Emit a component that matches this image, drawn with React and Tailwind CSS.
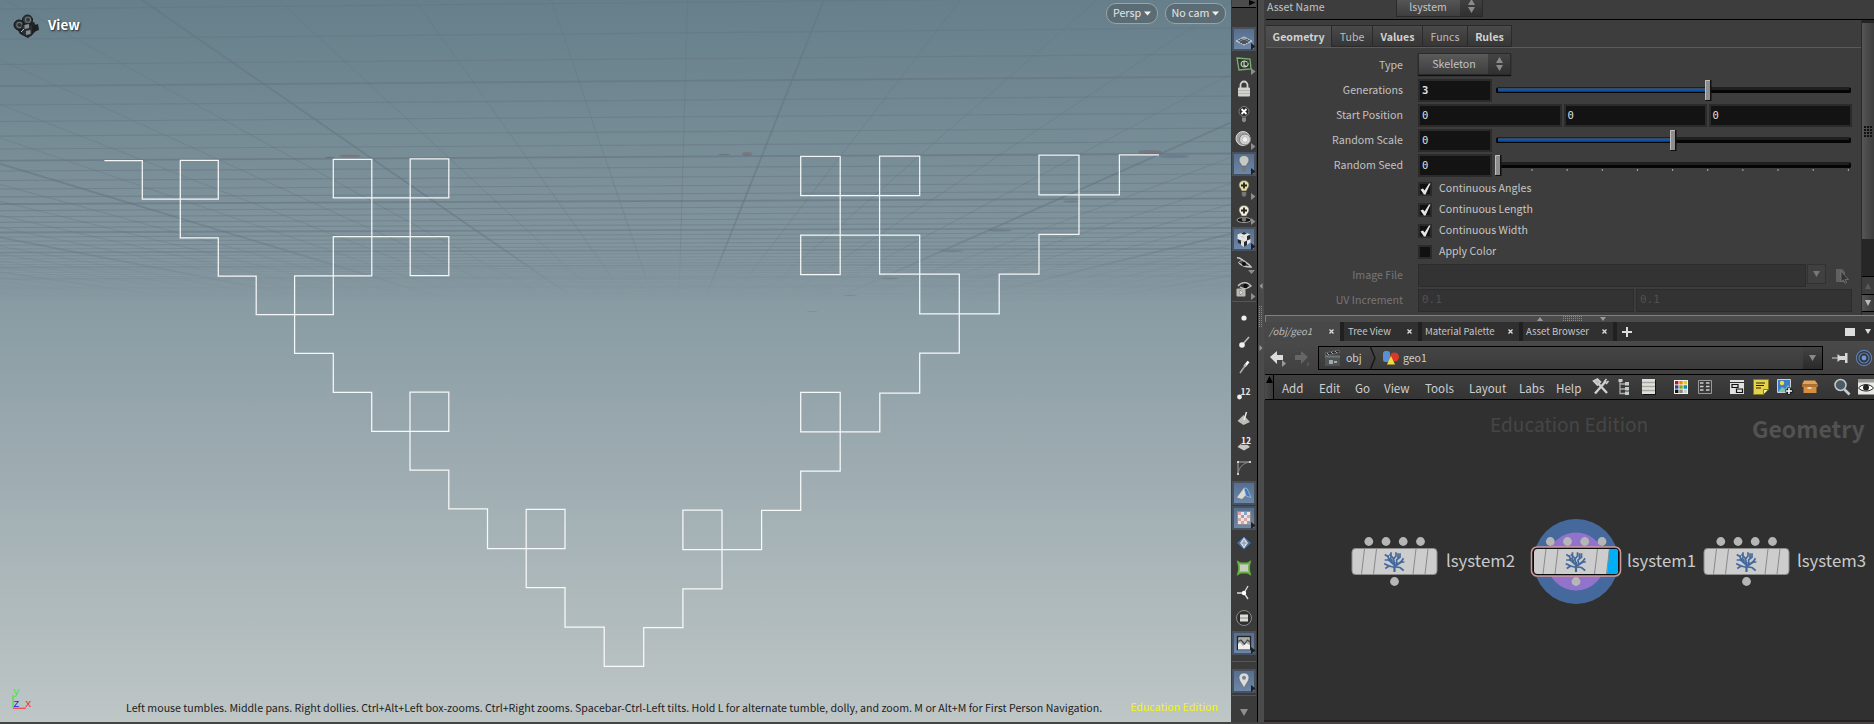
import React from "react";

const GRID_ROWS = Array.from({ length: 50 }, (_, i) => i - 3);
const GRID_COLS = Array.from({ length: 90 }, (_, i) => i - 45);
const HORIZON = 369;
const VANISH_X = 677;

function T({ className = "", children }) {
  return <span className={"inline-block whitespace-nowrap " + className}>{children}</span>;
}

function Grid() {
  return (
    <g stroke="#5f6c7c" clipPath="url(#sky)" mask="url(#fade)">
      {GRID_ROWS.map((n) => {
        const h = 3959 / (14 + n);
        return (
          <line key={"r" + n} x1="0" x2="1231" y1={HORIZON - h} y2={HORIZON - h * 1.0342}
            strokeWidth={n % 5 === 0 ? 1.8 : 1.1} strokeOpacity={n % 5 === 0 ? 0.5 : 0.4} />
        );
      })}
      {GRID_COLS.map((k) => {
        const x = 824 + k * 136.4;
        return (
          <line key={"c" + k} x1={x} y1="0" x2={VANISH_X} y2={HORIZON}
            strokeWidth={k % 5 === 0 ? 1.8 : 1} strokeOpacity={k % 5 === 0 ? 0.45 : 0.32} />
        );
      })}
    </g>
  );
}

function Scene() {
  return (
    <svg className="absolute inset-0" width="1231" height="722" viewBox="0 0 1231 722">
      <defs>
        <clipPath id="sky"><rect width="1231" height="325" /></clipPath>
        <linearGradient id="fadeGrad" x1="0" y1="0" x2="0" y2="1">
          <stop offset="0" stopColor="#fff" stopOpacity=".7" />
          <stop offset=".6" stopColor="#fff" />
          <stop offset=".76" stopColor="#fff" stopOpacity=".75" />
          <stop offset=".93" stopColor="#fff" stopOpacity="0" />
        </linearGradient>
        <mask id="fade"><rect width="1231" height="325" fill="url(#fadeGrad)" /></mask>
      </defs>
      <Grid />
      <g fillOpacity=".5">
        <ellipse cx="747" cy="154" rx="5" ry="2" fill="#7a6268" />
        <ellipse cx="724" cy="154.5" rx="6" ry=".8" fill="#5b6570" />
        <ellipse cx="350" cy="156" rx="11" ry="1.3" fill="#75635f" />
        <ellipse cx="330" cy="157.5" rx="5" ry=".7" fill="#5b6570" />
        <ellipse cx="1150" cy="152" rx="12" ry="2" fill="#75606a" />
        <ellipse cx="1174" cy="156.5" rx="15" ry="1.6" fill="#5c6e84" />
        <ellipse cx="1071" cy="201.5" rx="8" ry="1" fill="#5c6a74" />
        <ellipse cx="1000" cy="230.5" rx="12" ry="1" fill="#5c6a74" />
        <ellipse cx="952" cy="251" rx="12" ry=".8" fill="#5c6a74" />
        <ellipse cx="890" cy="278.5" rx="9" ry=".8" fill="#66747c" />
        <ellipse cx="850" cy="295.5" rx="7" ry=".5" fill="#6c7a82" />
        <ellipse cx="812" cy="311.5" rx="6" ry=".4" fill="#74828a" />
      </g>
      <path fill="none" stroke="#fff" strokeWidth="1.25" strokeOpacity=".92"
        d="M104.4 160.7H142.3V199H218.3V160.3H180.3V237.8H218.3V276H256.2V314.6H333.3V236.7H448.8V275.7H410.2V158.8H448.8V197.8H333.3V159.3H371.8V275.8H294.6V353.4H333.3V392.3H371.7V431.3H448.8V392.2H410V470.2H448.8V508.9H487.5V548.6H565V509.4H526.2V587.7H565V627.2H604.2V666.4H643.7V627.6H682.9V588.9H722V510.2H682.9V549.6H761.6V510.4H800.7V471.2H840.2V392.3H800.7V431.9H879.8V393H919.7V353H959.3V274.2H879.6V156H919.7V195.6H800.7V156.3H840.2V274.5H800.7V235.2H919.7V313.8H999.2V274H1039V234.3H1079V155.1H1039V194.8H1119.4V154.8H1159" />
      <g fill="none" strokeWidth="1.4">
        <path d="M13 695V708" stroke="#55dd55" />
        <path d="M13 708.3H26" stroke="#ee5555" />
      </g>
    </svg>
  );
}

function CameraIcon() {
  return (
    <svg width="28" height="26" viewBox="0 0 28 26">
      <path d="M4 14l6-6 12 1 4 7-6 6-4 3-8-4z" fill="#22282b" />
      <circle cx="7" cy="12" r="5" fill="#2a2f32" stroke="#14181a" />
      <circle cx="15.500" cy="7" r="5" fill="#33393d" stroke="#14181a" />
      <circle cx="7.400" cy="12" r="2.600" fill="none" stroke="#6d757a" strokeWidth="1.100" />
      <circle cx="16" cy="6.800" r="2.600" fill="none" stroke="#6d757a" strokeWidth="1.100" />
      <path d="M10 12l6-2 5 3-1 9-5 2-6-4z" fill="#2b3033" stroke="#14181a" strokeWidth=".6" />
      <path d="M12.500 12l4.500-1v4l-4.500 1zM14 18l4.500-1v4l-4.500 1z" fill="#868e93" />
      <path d="M20 13l6-2 1 6-6 2z" fill="#1c2022" />
      <path d="M9 19l3-3" stroke="#b9bec0" />
    </svg>
  );
}

function Pill({ className, children }) {
  return (
    <div className={"flex h-[21px] items-center justify-center gap-[3px] rounded-[10px] border-[1.5px] border-[#98a4a8] bg-[#5c6c74] pb-px text-[#e2e6e8] " + className}>
      <T className="text-[10.7px] leading-[16px]">{children}</T>
      <svg width="7" height="5" viewBox="0 0 7 5"><path d="M0 .5h7L3.500 4.500z" fill="#f0f0f0" /></svg>
    </div>
  );
}

function Viewport() {
  return (
    <div className="relative h-[722px] w-[1231px] shrink-0 overflow-hidden bg-linear-to-b from-[#667f8a] via-[#90a1a8] to-[#bec6c6]">
      <Scene />
      <div className="absolute left-[12px] top-[13px] flex items-start gap-[8px]">
        <CameraIcon />
        <T className="text-[13.5px] font-bold leading-[22px] text-white [text-shadow:1px_1px_2px_#222]">View</T>
      </div>
      <div className="absolute right-[5px] top-[3px] flex gap-[7px]">
        <Pill className="w-[52px]">Persp</Pill>
        <Pill className="w-[61px]">No cam</Pill>
      </div>
      <span className="absolute left-[13px] top-[686px] font-mono text-[11px] leading-[12px] text-[#33ee33]">y</span>
      <span className="absolute left-[13px] top-[698px] font-mono text-[11px] leading-[12px] text-[#2222ee]">z</span>
      <span className="absolute left-[25px] top-[698px] font-mono text-[11px] leading-[12px] text-[#ee3333]">x</span>
      <div className="absolute bottom-[4px] left-[126px] right-[13px] flex items-center justify-between">
        <T className="text-[10.64px] leading-[18px] text-[#1e2222]">
          Left mouse tumbles. Middle pans. Right dollies. Ctrl+Alt+Left box-zooms. Ctrl+Right zooms. Spacebar-Ctrl-Left tilts. Hold L for alternate tumble, dolly, and zoom. M or Alt+M for First Person Navigation.
        </T>
        <T className="pb-[2px] text-[10.6px] leading-[18px] text-[#f6f600]">Education Edition</T>
      </div>
    </div>
  );
}

const bulb = (fill) => (
  <>
    <path d="M12 3.500c-3 0-5 2-5 4.600 0 2.400 2 3.600 2.600 5.900h4.800C15 11.700 17 10.500 17 8.100 17 5.500 15 3.500 12 3.500z" fill={fill} stroke="#555" strokeWidth=".6" />
    <path d="M9.800 15h4.400v3.500l-2.200 1.500-2.200-1.500z" fill="#777" />
  </>
);

const ICONS = {
  plane: <><path d="M4 14l8-4 8 4-8 4z" fill="#8b959c" stroke="#d8dde0" strokeWidth=".8" /><path d="M8 12l8 4M16 12l-8 4M6 13l8 4M10 17l8-4" stroke="#2e3438" strokeWidth=".8" /></>,
  snap: <><path d="M5 6l13 1 1 10-12 1z" fill="#2f3a2e" stroke="#7fae74" strokeWidth="1.300" /><path d="M15.500 10.500c-1-2-5-2-6 0s0 4.500 3 4.500 4-2 3.500-4M12 9.500v4l3 1" fill="none" stroke="#cfdccb" strokeWidth="1.100" /></>,
  lock: <><path d="M8.500 11V8a3.500 3.500 0 017 0v3" fill="none" stroke="#d0d0ce" strokeWidth="1.800" /><rect x="6" y="10.500" width="12" height="9" rx="1" fill="#d4d2cc" /><path d="M6 13.500h12M6 16.500h12" stroke="#a9a7a2" strokeWidth=".7" /></>,
  nolight: <><circle cx="12" cy="9.500" r="5" fill="#26282a" stroke="#8d9494" strokeWidth=".8" /><path d="M9.500 7l5 5M14.500 7l-5 5" stroke="#fff" strokeWidth="1.800" /><path d="M10 15.500h4V19l-2 1.500-2-1.500z" fill="#8a8a8a" /></>,
  headlight: <><circle cx="11" cy="11.500" r="7" fill="#9fa3a3" stroke="#d8d8d8" /><circle cx="13" cy="12.500" r="5.500" fill="#d0d0ce" stroke="#7c7c7c" /><circle cx="13" cy="12.500" r="2.800" fill="#f0f0ee" stroke="#aaa" strokeWidth=".6" /></>,
  bulb: bulb("#c6c8c6"),
  bulbplus: <>{bulb("#e3e0a0")}<path d="M12 5.500v6M9 8.500h6" stroke="#222" strokeWidth="1.800" /></>,
  bulbshadow: <><ellipse cx="12" cy="18" rx="7" ry="2.500" fill="#111" stroke="#bbb" strokeWidth=".8" />{bulb("#f2f1d8")}<path d="M12 5.500v6M9 8.500h6" stroke="#222" strokeWidth="1.800" /></>,
  cube: <><path d="M12 5l6.500 2.500v8L12 20l-6.500-4.500v-8z" fill="#e4e4e4" /><path d="M5.500 7.500L9 9l3 1.500v4.500l-3-1.500V9zM5.500 12l3.500 1.500v4.300l-3.500-2.300zM12 10.500l3-1.500 3.500-1.500V12L15 13.500V9zM12 15l3-1.500v4.500L12 20zM9 6.200L12 5l3 1.200-3 1.500z" fill="#26292d" /><path d="M9 9l3 1.500V15l-3-1.500z" fill="#e4e4e4" /></>,
  eye1: <><path d="M5 6c2-1 4 1 7 3s5 3 7 6c-5 0-9-1-12-4" fill="none" stroke="#c8c8c6" strokeWidth="1.400" /><path d="M6 11c2-3 6-3 8-1" fill="none" stroke="#a8a8a6" /><circle cx="12" cy="12" r="2" fill="#0d0d0d" /></>,
  eye2: <><path d="M6 9c4-5 10-4 13 0-4 3-8 3-11 1" fill="none" stroke="#c8c8c6" strokeWidth="1.400" /><circle cx="13.500" cy="9" r="2.200" fill="#0d0d0d" /><rect x="4.500" y="11.500" width="9" height="8" rx="1" fill="#b9b9b6" /><path d="M8 13l3 2.500-3 2.500z" fill="#f2f2f0" stroke="#666" strokeWidth=".5" /></>,
  dot: <circle cx="12" cy="12" r="2.600" fill="#efefed" />,
  normal: <><path d="M10 14l7-8" stroke="#b6b6b4" strokeWidth="1.600" /><circle cx="10" cy="14" r="2.800" fill="#efefed" /></>,
  trail: <><path d="M16.500 5.500l-4 5" stroke="#fff" strokeWidth="2.600" /><path d="M14 8.500L8 17" stroke="#aaa" strokeWidth="1.600" /></>,
  ptnum: <><circle cx="7.500" cy="16" r="2.400" fill="#efefed" /><text x="8.500" y="13.500" fontSize="8.500" fontWeight="700" fill="#e6e6e4">12</text></>,
  primnorm: <><path d="M5.500 15l6-6 6.500 7-6.500 3z" fill="#bdbdb9" /><path d="M12 14l2.500-8" stroke="#eee" strokeWidth="1.400" /></>,
  primnum: <><path d="M5.500 16l6-6 6.500 6-6 3.500z" fill="#c6c6c2" /><text x="9" y="12.500" fontSize="8.500" fontWeight="700" fill="#f2f2f0" stroke="#3b3b3b" strokeWidth="1.500" paintOrder="stroke">12</text></>,
  hull: <><path d="M6 19V6h13" fill="none" stroke="#a8a8a6" /><path d="M6 18C7 11 11 7 18 6" fill="none" stroke="#8c8c8a" /><path d="M5 5h2v2H5zM5 17h2v2H5zM17 5h2v2h-2z" fill="#ccc" /></>,
  backface: <><path d="M5 16.500l7-9.500 2 7-4 4z" fill="#dcdad0" /><path d="M12 7l3 .5 4 9-5-1.500z" fill="#3f79c4" stroke="#b8cce6" strokeWidth=".6" /></>,
  checker: <><rect x="5.500" y="5.500" width="13" height="13" fill="#e8e4e2" stroke="#8d8d8d" /><path d="M6 6h3v3H6zM15 9h3v3h-3zM6 12h3v3H6zM12 12h3v3h-3zM9 15h3v3H9z" fill="#d9a5a5" /><path d="M12 6h3v3h-3zM9 9h3v3H9zM15 15h3v3h-3z" fill="#8aa3c8" /></>,
  diamond: <><path d="M12 5l7.500 7L12 19l-7.500-7z" fill="#4b6f9f" stroke="#2c3e55" /><path d="M12 6.500l4 5.500-4 5.500L8 12z" fill="#d6dce0" /><path d="M12 9v6M9.500 12h5" stroke="#889" /></>,
  deform: <><path d="M6 6l3 1.500h6L18 6l-1 4v4l1 4-3-1.500H9L6 18l1-4v-4z" fill="#c8ccc6" stroke="#67b03d" strokeWidth="1.800" /></>,
  axes: <><path d="M12 12l4-7M12 12l4 6M12 12H5" stroke="#d8d8d6" strokeWidth="1.400" /><circle cx="12" cy="12" r="2.200" fill="#fff" /></>,
  disk: <><circle cx="12" cy="12" r="7.500" fill="#2f2f2f" stroke="#8a8a88" strokeWidth="1" /><path d="M8 8.500h8v7H8z" fill="#ddddd8" /><path d="M8 12h8" stroke="#888" strokeWidth="1" /></>,
  image: <><rect x="5.500" y="5.500" width="13" height="13" fill="#a8acac" stroke="#222" strokeWidth="1.300" /><path d="M6 13l2-1.500 3 3.500 3-3 4 2v4.500H6z" fill="#efeeea" /><path d="M6 10.500l3-1.500 3.500 4 3-4 2.500 2" fill="none" stroke="#444" strokeWidth="1.200" /></>,
  pin: <><path d="M12 4c-3 0-5 2-5 4.800 0 3.500 3.500 6 5 10.700 1.500-4.700 5-7.200 5-10.700C17 6 15 4 12 4z" fill="#dcdcd8" stroke="#5d5d5d" strokeWidth=".6" /><circle cx="12" cy="8.800" r="2" fill="#70869e" /></>,
};

const TOP_TOOLS = [
  ["plane", 1, 1], ["snap", 0, 1], ["lock"], ["nolight"], ["headlight", 0, 1], ["bulb", 1, 1],
  ["bulbplus", 0, 1], ["bulbshadow", 0, 1], ["cube", 1, 1], ["eye1", 0, 2], ["eye2", 0, 1],
];
const LOW_TOOLS = [
  ["dot"], ["normal"], ["trail"], ["ptnum"], ["primnorm"], ["primnum"], ["hull"], ["backface", 1],
  ["checker", 1, 1], ["diamond"], ["deform"], ["axes"], ["disk"], ["image", 1, 1],
];

function Tool({ name, active, menu }) {
  return (
    <div className="flex h-[25px] shrink-0 items-center justify-center">
      <div className={active
        ? "h-[24px] w-[24px] border-2 border-[#48525e] bg-linear-to-b from-[#566f8e] to-[#6d87a9]"
        : "h-[24px] w-[24px] border-2 border-transparent"}>
        <svg className="m-[-2px]" width="24" height="24" viewBox="0 0 24 24">
          {ICONS[name]}
          {menu === 1 && <path d="M19 16l4.500 3.500-4.500 3.500z" fill={active ? "#1d2127" : "#8e8e8e"} />}
          {menu === 2 && <path d="M16 18h7l-3.500 4z" fill="#8e8e8e" />}
        </svg>
      </div>
    </div>
  );
}

function Toolbar() {
  return (
    <div className="flex h-[722px] w-[26px] shrink-0 flex-col bg-[#3b3b3b] px-px">
      <div className="mb-[18px] flex h-[8px] shrink-0 justify-end border-b border-black bg-[#4c4c4c]">
        <svg width="7" height="6" viewBox="0 0 7 6"><path d="M0 0v5.500L6.500 2.500z" fill="#050505" /></svg>
      </div>
      {TOP_TOOLS.map(([n, a, m]) => <Tool key={n} name={n} active={a} menu={m} />)}
      <div className="mb-[3px] h-px shrink-0 bg-[#565656]" />
      {LOW_TOOLS.map(([n, a, m]) => <Tool key={n} name={n} active={a} menu={m} />)}
      <div className="mb-[6px] mt-[6px] h-px shrink-0 bg-[#565656]" />
      <Tool name="pin" active={1} menu={1} />
      <div className="mb-[13px] mt-[2px] h-px shrink-0 bg-[#565656]" />
      <svg className="mx-auto shrink-0" width="8" height="7" viewBox="0 0 8 7"><path d="M0 0h8L4 7z" fill="#8e8e8e" /></svg>
    </div>
  );
}

function Dots({ cols, rows, color = "#8a8a8a" }) {
  const out = [];
  for (let r = 0; r < rows; r++) for (let c = 0; c < cols; c++) out.push(<rect key={r + "-" + c} x={c * 2} y={r * 2} width="1" height="1" fill={color} />);
  return <svg className="shrink-0" width={cols * 2} height={rows * 2}>{out}</svg>;
}

function VSplitter() {
  return (
    <div className="flex h-[722px] w-[7px] shrink-0 flex-col items-center border-l-[1.5px] border-black bg-[#4b4b4b] pt-[283px]">
      <svg className="shrink-0" width="4" height="6"><path d="M3.500 0v6L.5 3z" fill="#999" /></svg>
      <div className="mb-[17px] mt-[17px] shrink-0"><Dots cols={2} rows={11} /></div>
      <svg className="shrink-0" width="4" height="6"><path d="M.5 0v6l3-3z" fill="#999" /></svg>
    </div>
  );
}

function Select({ className, children }) {
  return (
    <div className={"flex shrink-0 border border-[#2a2a2a] bg-linear-to-b from-[#5a5a5a] to-[#3e3e3e] shadow-[0_1px_1px_#111] " + className}>
      <div className="flex flex-1 items-center justify-center pb-px pl-px text-[#c4c4c4]"><T className="text-[10.7px] leading-[16px]">{children}</T></div>
      <div className="flex w-[22px] items-center justify-center bg-linear-to-b from-[#444] to-[#303030]">
        <svg width="7" height="14" viewBox="0 0 7 14"><path d="M0 6L3.500 0 7 6zM0 8h7L3.500 14z" fill="#8b8b8b" /></svg>
      </div>
    </div>
  );
}

function Field({ className = "", bold, children }) {
  return (
    <div className={"flex h-[23px] shrink-0 items-center border-2 border-[#2b2b2b] bg-[#131313] pl-[2px] pb-px font-['DejaVu_Sans_Mono',monospace] text-[10.5px] leading-[16px] text-[#e0e0e0] " + (bold ? "font-bold " : "") + className}>
      {children}
    </div>
  );
}

function DimField({ className = "", children }) {
  return (
    <div className={"flex h-[23px] shrink-0 items-center border border-[#2c2c2c] bg-[#333] pb-px pl-[3px] font-['DejaVu_Sans_Mono',monospace] text-[11px] leading-[16px] text-[#515151] " + className}>
      {children}
    </div>
  );
}

function Slider({ value, ticks }) {
  return (
    <svg className="ml-[3px] shrink-0" width="358" height="23" viewBox="0 0 358 23">
      <rect x="1" y="8.500" width="355" height="5.500" rx="1.500" fill="#050505" />
      <path d="M3 10h351" stroke="#3c3c3c" />
      {value > 3 && <rect x="3" y="10.200" width={value - 3} height="2.600" fill="#0a4fa3" />}
      {value > 3 && <path d={"M3 9.900H" + value} stroke="#5583b8" strokeWidth=".7" />}
      {ticks && Array.from({ length: 10 }, (_, i) => <rect key={i} x={36.500 + i * 35.150} y="15" width="1" height="2" fill="#aaa" />)}
      <rect x={value - 2.500} y="1" width="6" height="21" fill="#111" />
      <rect x={value - 3} y="1" width="5" height="20" fill="#8d8d8d" />
      <path d={"M" + (value - 2.500) + " 21V1.500H" + (value + 2)} fill="none" stroke="#bdbdbd" />
    </svg>
  );
}

function Row({ label, dim, className = "", children }) {
  return (
    <div className={"flex h-[25px] shrink-0 items-center " + className}>
      <div className={"mr-[15px] flex w-[139px] shrink-0 justify-end pb-[1px] " + (dim ? "text-[#767676]" : "text-[#c2c2c2]")}>
        <T className="text-[10.65px] leading-[18px]">{label}</T>
      </div>
      {children}
    </div>
  );
}

function Check({ on, children }) {
  return (
    <div className="ml-[154px] flex h-[21px] shrink-0 items-center text-[#c6c6c6]">
      <div className="mr-[7px] h-[14px] w-[14px] border-2 border-[#2a2a2a] bg-[#111]">
        {on && <svg className="m-[-2px]" width="14" height="14" viewBox="0 0 14 14"><path d="M2.500 7.500L5 6.500l1.500 2L11 1.500h1.500L7.500 12.500H6z" fill="#e4e4e4" /></svg>}
      </div>
      <T className="pb-[2px] text-[10.6px] leading-[18px]">{children}</T>
    </div>
  );
}

function ParamTab({ bold, active, className, children }) {
  return (
    <div className={"flex items-center justify-center border border-l-0 border-[#2a2a2a] pt-px text-[#bdbdbd] " + (active ? "border-b-0 bg-linear-to-b from-[#505050] to-[#464646] " : "bg-linear-to-b from-[#4a4a4a] to-[#363636] ") + className}>
      <T className={"text-[10.6px] leading-[18px] " + (bold ? "font-bold text-[#d2d2d2]" : "")}>{children}</T>
    </div>
  );
}

function Params() {
  return (
    <div className="flex h-[315px] flex-col bg-[#3d3d3d]">
      <div className="ml-[2px] flex h-[20px] shrink-0 items-start overflow-hidden border-b border-black text-[#c2c2c2]">
        <div className="flex w-[130px] pl-px"><T className="text-[10.5px] leading-[14px]">Asset Name</T></div>
        <div className="flex h-[17px] w-[87px] shrink-0 border border-t-0 border-[#2a2a2a] bg-linear-to-b from-[#555] to-[#3e3e3e]">
          <div className="flex flex-1 justify-center pr-px text-[#c4c4c4]"><T className="text-[10.5px] leading-[13px]">lsystem</T></div>
          <div className="flex w-[22px] items-start justify-center bg-linear-to-b from-[#404040] to-[#303030]">
            <svg width="7" height="13" viewBox="0 0 7 13"><path d="M0 5L3.500 -1 7 5zM0 7h7L3.500 13z" fill="#8b8b8b" /></svg>
          </div>
        </div>
      </div>
      <div className="flex min-h-0 flex-1">
        <div className="flex w-[597px] shrink-0 flex-col">
          <div className="ml-[2px] flex h-[28px] shrink-0 border-b border-[#5a5a5a] pt-[5px]">
            <ParamTab bold active className="w-[66px]">Geometry</ParamTab>
            <ParamTab className="w-[41px]">Tube</ParamTab>
            <ParamTab bold className="w-[50px]">Values</ParamTab>
            <ParamTab className="w-[45px]">Funcs</ParamTab>
            <ParamTab bold className="w-[44px]">Rules</ParamTab>
          </div>
          <div className="flex flex-col pt-[5px]">
            <Row label="Type"><Select className="mb-[3px] h-[22px] w-[93px]">Skeleton</Select></Row>
            <Row label="Generations"><Field bold className="w-[74px]">3</Field><Slider value={213} /></Row>
            <Row label="Start Position">
              <div className="flex gap-[2px]"><Field className="w-[143.500px]">0</Field><Field className="w-[143px]">0</Field><Field className="w-[143px]">0</Field></div>
            </Row>
            <Row label="Random Scale"><Field className="w-[74px]">0</Field><Slider value={178} /></Row>
            <Row label="Random Seed"><Field className="w-[74px]">0</Field><Slider value={3} ticks /></Row>
            <div className="flex flex-col pb-px">
              <Check on>Continuous Angles</Check>
              <Check on>Continuous Length</Check>
              <Check on>Continuous Width</Check>
              <Check>Apply Color</Check>
            </div>
            <Row label="Image File" dim>
              <DimField className="w-[388px]" />
              <div className="ml-px mt-[-3px] flex h-[20px] w-[19px] items-center justify-center border border-[#323232] bg-[#404040]">
                <svg width="7" height="6"><path d="M0 0h7L3.500 6z" fill="#777" /></svg>
              </div>
              <svg className="ml-[9px]" width="16" height="18" viewBox="0 0 16 18"><path d="M1 2h6l3 3v10H1z" fill="#606060" /><path d="M6 4l7.500 8.500-3.500 0 1.500 3-1.500.8L8.500 13 6 15z" fill="#333" stroke="#777" strokeWidth=".8" /></svg>
            </Row>
            <Row label="UV Increment" dim>
              <div className="flex gap-[2px]"><DimField className="w-[216px]">0.1</DimField><DimField className="w-[216px]">0.1</DimField></div>
            </Row>
          </div>
        </div>
        <div className="flex flex-1 flex-col border-l border-[#2a2a2a] bg-[#262626] pt-[2px]">
          <div className="flex h-[217px] shrink-0 items-center justify-center border-t border-[#222] bg-linear-to-r from-[#565656] to-[#3c3c3c]">
            <svg width="8" height="11">{[0, 3, 6].map((x) => [0, 3, 6, 9].map((y) => <rect key={x + "" + y} x={x} y={y} width="2" height="2" fill="#111" />))}</svg>
          </div>
          <div className="h-[38px] shrink-0 border-b border-black" />
          <div className="flex h-[18px] shrink-0 items-center justify-center border-b border-black bg-[#3d3d3d]"><svg width="6" height="6"><path d="M0 6h6L3 0z" fill="#5a5a5a" /></svg></div>
          <div className="flex h-[17px] shrink-0 items-center justify-center border-b border-black bg-linear-to-r from-[#555] to-[#3c3c3c]"><svg width="6" height="6"><path d="M0 0h6L3 6z" fill="#bbb" /></svg></div>
          <div className="flex-1 bg-[#3d3d3d]" />
        </div>
      </div>
    </div>
  );
}

function HSplitter() {
  return (
    <div className="ml-px flex h-[7px] shrink-0 items-center border-l border-t border-[#808080] bg-[#4b4b4b] pl-[271px]">
      <svg width="6" height="4"><path d="M0 4h6L3 0z" fill="#999" /></svg>
      <div className="ml-[20px] mr-[17px]"><Dots cols={10} rows={3} /></div>
      <svg width="6" height="4"><path d="M0 0h6L3 4z" fill="#999" /></svg>
    </div>
  );
}

function PaneTab({ active, className, children }) {
  return (
    <div className={"flex shrink-0 items-center justify-between pr-[6px] " + (active ? "bg-[#484848] italic text-[#bcbcbc] " : "border-l-4 border-[#202020] bg-[#303030] text-[#c6c6c6] ") + className}>
      <T className="pb-px text-[9.6px] leading-[16px]">{children}</T>
      <svg width="5" height="5" viewBox="0 0 5 5"><path d="M.5 .5l4 4M4.500 .5l-4 4" stroke="#ddd" strokeWidth="1.300" /></svg>
    </div>
  );
}

function PathBar() {
  return (
    <div className="flex h-[33px] shrink-0 items-center bg-linear-to-b from-[#4a4a4a] to-[#404040] pl-[5px]">
      <svg width="18" height="18" viewBox="0 0 18 18"><path d="M1 8l7-6v4h6v5H8v4z" fill="#dcdcda" /><path d="M13 11l4 3.500-4 3.500z" fill="#999" /></svg>
      <svg className="ml-[7px]" width="18" height="18" viewBox="0 0 18 18"><path d="M14 8L7 2v4H1v5h6v4z" fill="#666" /><path d="M13 12l3 3-3 3z" fill="#555" /></svg>
      <div className="ml-[6px] flex h-[24px] w-[505px] items-center border border-black bg-linear-to-b from-[#454545] to-[#3a3a3a] text-[#d0d0d0]">
        <svg className="ml-[5px]" width="18" height="18" viewBox="0 0 18 18"><path d="M1 8h15v9H1z" fill="#4e5456" /><path d="M1 4l14-3 .6 2.500-14 3z" fill="#2a2d2f" stroke="#8a8f90" strokeWidth=".5" /><path d="M3 4l2 2M7 3l2 2M11 2l2 2" stroke="#aaa" /><path d="M1 6.500h15v2H1z" fill="#6d7476" /><path d="M5 11h4v4H5zM10 12h3v2h-3z" fill="#a3a9ab" /></svg>
        <T className="ml-[4px] w-[16px] text-[10.5px] leading-[18px]">obj</T>
        <svg className="ml-[8px]" width="6" height="22" viewBox="0 0 6 22"><path d="M.5 0L5 11 .5 22" fill="none" stroke="#161616" strokeWidth="1.400" /></svg>
        <svg className="ml-[6px]" width="18" height="16" viewBox="0 0 18 16"><rect x="1" y="1" width="7" height="11" rx="2.500" fill="#5b8fd4" /><circle cx="12.500" cy="7" r="4.500" fill="#d93a28" /><path d="M9 6l4 8.500H5z" fill="#f1dc3c" /></svg>
        <T className="ml-[3px] text-[10.5px] leading-[18px]">geo1</T>
        <div className="ml-auto flex h-full w-[19px] items-center justify-center bg-linear-to-b from-[#444] to-[#2a2a2a]"><svg width="7" height="6"><path d="M0 0h7L3.500 6z" fill="#8a8a8a" /></svg></div>
      </div>
      <svg className="ml-[9px]" width="17" height="14" viewBox="0 0 17 14"><path d="M0 7h6" stroke="#bbb" strokeWidth="1.200" /><path d="M5.500 3v8l2.500-2h5v3h2.500V2H13v3H8z" fill="#d6d6d4" /></svg>
      <svg className="ml-[6px]" width="18" height="18" viewBox="0 0 18 18"><circle cx="9" cy="9" r="7.600" fill="#34383e" stroke="#5d7eb2" strokeWidth="1.200" /><circle cx="9" cy="9" r="5" fill="none" stroke="#5d7eb2" strokeWidth="1.200" /><circle cx="9" cy="9" r="2.400" fill="#6f98dc" /></svg>
    </div>
  );
}

const MENUS = [["Add", "w-[37px]"], ["Edit", "w-[36px]"], ["Go", "w-[29px]"], ["View", "w-[41px]"], ["Tools", "w-[44px]"], ["Layout", "w-[50px]"], ["Labs", "w-[37px]"], ["Help", "w-[36px]"]];

function MenuIcon({ className = "", children }) {
  return <svg className={"shrink-0 " + className} width="18" height="18" viewBox="0 0 18 18">{children}</svg>;
}

const SWATCHES = ["#c11", "#e80", "#dc2", "#249", "#7a2", "#18b", "#111", "#888", "#ccc"];

function MenuBar() {
  return (
    <div className="ml-px flex h-[26px] shrink-0 items-center border-y border-black bg-linear-to-b from-[#3f3f3f] to-[#343434] text-[#cfcfcf]">
      <div className="mr-[8px] flex h-full w-[9px] shrink-0 justify-center border-r border-black bg-linear-to-r from-[#4c4c4c] to-[#383838] pt-px"><svg width="7" height="7"><path d="M0 7h7L3.500 0z" fill="#000" /></svg></div>
      {MENUS.map(([m, c]) => <div key={m} className={"shrink-0 pb-[3px] " + c}><T className="text-[11.6px] leading-[20px]">{m}</T></div>)}
      <MenuIcon className="ml-0"><path d="M3 15.500L14 3M4 3l11 12" stroke="#cfcfcb" strokeWidth="2.400" /><path d="M1.500 3l4-2 3 3-3 3zM12 4l2.500-3M16.500 3L14 6" stroke="#cfcfcb" strokeWidth="1.600" fill="#bbb" /></MenuIcon>
      <MenuIcon className="ml-[6px]"><path d="M4 2v13.500h5M4 6h5M4 11h5" stroke="#aaa" fill="none" strokeWidth="1.300" /><path d="M2.500 1h4v3h-4zM9 4h4v3.500H9zM9 9h4v3.500H9zM9 13.500h4V17H9z" fill="#c6ccc8" /></MenuIcon>
      <MenuIcon className="ml-[6px]"><path d="M3 2h13v15H3z" fill="#111" /><path d="M2 1h13v15H2z" fill="#dfe0da" /><path d="M2 4.500h13M2 8.500h13M2 12.500h13" stroke="#a7a8a2" strokeWidth="1.500" /></MenuIcon>
      <MenuIcon className="ml-[14px]"><path d="M2 2h14v14H2z" fill="#f2f2f0" />{SWATCHES.map((c, i) => <rect key={c} x={3 + (i % 3) * 4.300} y={3 + Math.floor(i / 3) * 4.300} width="3.400" height="3.400" fill={c} />)}</MenuIcon>
      <MenuIcon className="ml-[6px]"><path d="M2.500 2.500h13v13h-13z" fill="#3a3a3a" stroke="#9a9a98" />{[4.500, 8, 11.500].map((y) => <path key={y} d={"M4 " + (y + .5) + "h3.500M10 " + (y + .5) + "h3.500"} stroke="#cfcfcd" strokeWidth="1.500" />)}</MenuIcon>
      <MenuIcon className="ml-[14px]"><path d="M2 2h14v14H2z" fill="#e0e2e2" /><path d="M2 4.500h14" stroke="#333" /><path d="M4 6.500h6v3H4zM8.500 11h6v3.500h-6z" fill="#ddd" stroke="#111" strokeWidth="1.200" /></MenuIcon>
      <MenuIcon className="ml-[6px]"><path d="M1.500 1.500h15v10l-5 5h-10z" fill="#e6d24a" stroke="#8a7a1e" /><path d="M4 5h9M4 7.500h8M4 10h5" stroke="#222" strokeWidth="1.200" /><path d="M11.500 16.500v-5h5z" fill="#f9f0a0" stroke="#8a7a1e" /></MenuIcon>
      <MenuIcon className="ml-[6px]"><path d="M1.500 1.500h13v13h-13z" fill="#3f7dc8" stroke="#c6d0d8" /><circle cx="6" cy="5" r="2.200" fill="#f0dc3c" /><path d="M2 14l4-5 3 2 3-4 2 3v4z" fill="#7fc0b0" /><path d="M13 9.500v7M9.500 13h7" stroke="#111" strokeWidth="3.600" /><path d="M13 10v6M10 13h6" stroke="#fff" strokeWidth="1.600" /></MenuIcon>
      <MenuIcon className="ml-[7px]"><path d="M3 2.500h11l3 4H1z" fill="#e5a458" /><path d="M1 6.500h16v2.500H1z" fill="#b8712a" /><path d="M2.500 9h13v6h-13z" fill="#d58f40" /><path d="M6.500 9h4v2h-4z" fill="#f4d2a0" /></MenuIcon>
      <MenuIcon className="ml-[14px]"><circle cx="7.500" cy="7" r="5.500" fill="#4b5c66" stroke="#c9cccc" strokeWidth="1.500" /><path d="M11.500 11.500l5 5" stroke="#c9cccc" strokeWidth="2.600" /></MenuIcon>
      <MenuIcon className="ml-[6px]"><path d="M1 1.500h16v15H1z" fill="#e8e8e4" /><path d="M1 1.500h16v3H1z" fill="#9a9a98" /><path d="M1.500 10C5 5.500 13 5.500 16.500 10 13 14 5 14 1.500 10z" fill="#fff" stroke="#222" /><circle cx="9" cy="9.500" r="3" fill="#222" /></MenuIcon>
    </div>
  );
}

function Tree() {
  return (
    <g fill="none" stroke="#45699b" strokeLinecap="square">
      <path d="M10.500 20V12M10.500 14L5 9M10.500 15.500L17 11" strokeWidth="2.200" />
      <path d="M10.500 12L9 7 6 4M9.500 8l2.500-3V2M5 9H1.500M5 9L4 5M13 13l-.5-4L16 6M17 11l2-3M17 11h2.500M9 16l-4-1-3 2M5 15l-4-2M7 6V2M14 7.500V3M16 6V3M12 16l4 .5 3 2.500M3 5L1.500 4M8 10L6.500 7.500" strokeWidth="1.700" />
    </g>
  );
}

function Node({ x, selected, label, labelX }) {
  return (
    <g>
      {selected && <><circle cx={x + 43} cy="161.500" r="42.500" fill="#46699d" /><circle cx={x + 43} cy="161.500" r="29" fill="#9173cc" /></>}
      {[17.300, 34.500, 51.700, 69].map((d) => <circle key={d} cx={x + d} cy="141.500" r="4.400" fill="#b6b6b6" />)}
      <circle cx={x + 43} cy="181.500" r="4.400" fill="#b6b6b6" />
      {selected && <rect x={x - 1.500} y="147" width="89" height="29" rx="5.500" fill="#0b0b0b" stroke="#cf9a9c" strokeWidth="1.600" />}
      <rect x={x + .5} y="148.500" width="85" height="26" rx="3.500" fill="#cdcdcd" stroke={selected ? "#0b0b0b" : "#8c8c8c"} />
      {selected && <path d={`M${x + 76} 149h6.500q2.500 0 2.500 2.500v20q0 2.500-2.500 2.500h-8.500z`} fill="#00aef5" />}
      {[11.500, 23.500, 63, 75].map((d) => <path key={d} d={`M${x + d + 1.500} 149L${x + d - 1.500} 174`} stroke="#8a8a8a" />)}
      <g transform={`translate(${x + 32.500} 151)`}><Tree /></g>
      <text x={labelX} y="166.500" fontSize="16.8" fill="#cacaca">{label}</text>
    </g>
  );
}

function Network() {
  return (
    <div className="relative min-h-0 flex-1 overflow-hidden border-b-2 border-[#262022] bg-[#303030]">
      <svg className="absolute left-0 top-0" width="610" height="320" viewBox="1264 0 610 320">
        <text x="1490" y="32" fontSize="19.1" fill="#464646">Education Edition</text>
        <text x="1752" y="38" fontSize="23" fontWeight="700" fill="#525252">Geometry</text>
        <Node x={1351.500} label="lsystem2" labelX="1446" />
        <Node x={1533} selected label="lsystem1" labelX="1627" />
        <Node x={1703.500} label="lsystem3" labelX="1797" />
      </svg>
    </div>
  );
}

export default function App() {
  return (
    <div className="h-[724px] w-[1874px] overflow-hidden bg-[#444] font-['Noto_Sans_CJK_SC','Noto_Sans',sans-serif]">
      <div className="flex h-[722px]">
        <Viewport />
        <Toolbar />
        <VSplitter />
        <div className="flex h-[722px] w-[610px] shrink-0 flex-col">
          <Params />
          <HSplitter />
          <div className="flex h-[19px] shrink-0 items-center bg-[#303030]">
            <PaneTab active className="h-full w-[76px] pl-[5px]">/obj/geo1</PaneTab>
            <PaneTab className="h-full w-[78px] pl-[4px]">Tree View</PaneTab>
            <PaneTab className="h-full w-[101px] pl-[3px]">Material Palette</PaneTab>
            <PaneTab className="h-full w-[94px] pl-[3px]">Asset Browser</PaneTab>
            <div className="h-full w-[4px] bg-[#202020]" />
            <svg className="ml-[5px]" width="10" height="10"><path d="M5 0v10M0 5h10" stroke="#ddd" strokeWidth="2" /></svg>
            <div className="ml-auto h-[8px] w-[10px] bg-[#dcdcda]" />
            <svg className="ml-[10px] mr-[3px]" width="6" height="5"><path d="M0 0h6L3 5z" fill="#ddd" /></svg>
          </div>
          <PathBar />
          <MenuBar />
          <Network />
        </div>
      </div>
    </div>
  );
}
